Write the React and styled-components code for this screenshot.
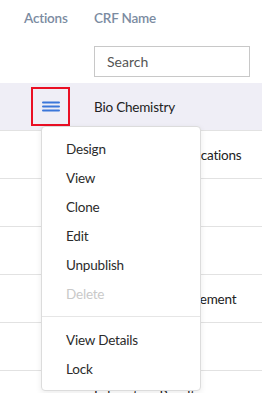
import React from 'react';
import styled, { createGlobalStyle } from 'styled-components';

const GlobalStyle = createGlobalStyle`
  body {
    margin: 0;
    background: #fff;
    font-family: Lato, "Open Sans", sans-serif;
    overflow: hidden;
  }
`;

const Page = styled.div`
  position: relative;
  width: 262px;
  height: 393px;
  overflow: hidden;
`;

const HeaderRow = styled.div`
  display: flex;
  height: 36px;
  align-items: center;
  color: #7b8ba1;
  font-size: 13.5px;
  font-weight: 600;
  letter-spacing: -0.2px;
`;

const ActionsHead = styled.div`
  width: 94px;
  padding-left: 24px;
  box-sizing: border-box;
`;

const FilterRow = styled.div`
  display: flex;
  padding: 10px 0 6px 94px;
`;

const SearchInput = styled.input`
  width: 156px;
  height: 31px;
  box-sizing: border-box;
  border: 1px solid #c8c8c8;
  padding: 0 12px;
  font-family: inherit;
  font-size: 14px;
  color: #555;
  outline: none;
  &::placeholder {
    color: #555;
  }
`;

const Row = styled.div`
  display: flex;
  align-items: center;
  height: 47px;
  border-bottom: 1px solid #e2e2e2;
  background: ${p => (p.selected ? '#efeef6' : '#fff')};
`;

const ActionCell = styled.div`
  width: 94px;
  padding-left: 31px;
  box-sizing: border-box;
`;

const MenuButton = styled.button`
  width: 39px;
  height: 39px;
  box-sizing: border-box;
  border: 2px solid #ea0f24;
  background: transparent;
  display: flex;
  align-items: center;
  justify-content: center;
  padding: 0;
`;

const NameCell = styled.div`
  font-size: 13.5px;
  letter-spacing: -0.2px;
  color: #222;
  white-space: nowrap;
`;

const Menu = styled.div`
  position: absolute;
  left: 41px;
  top: 126px;
  width: 160px;
  box-sizing: border-box;
  background: #fff;
  border: 1px solid #dcdcdc;
  border-radius: 4px;
  box-shadow: 0 2px 6px rgba(0, 0, 0, 0.08);
  padding: 7px 0;
`;

const MenuItem = styled.div`
  height: 29px;
  display: flex;
  align-items: center;
  padding-left: 24px;
  font-size: 13.5px;
  letter-spacing: -0.2px;
  color: ${p => (p.disabled ? '#c9c9c9' : '#2b2b2b')};
`;

const Divider = styled.div`
  height: 1px;
  background: #e6e6e6;
  margin: 8px 0;
`;

const rows = [
  'Concomitant Medications',
  '',
  '',
  'Study Data Management',
  '',
  'Laboratory Results',
];

const Hamburger = () => (
  <svg width="18" height="12" viewBox="0 0 18 12">
    <rect x="0" y="0.5" width="18" height="2" rx="1" fill="#3b76d9" />
    <rect x="0" y="4.5" width="18" height="2" rx="1" fill="#3b76d9" />
    <rect x="0" y="8.5" width="18" height="2" rx="1" fill="#3b76d9" />
  </svg>
);

export default function App() {
  return (
    <Page>
      <GlobalStyle />
      <HeaderRow>
        <ActionsHead>Actions</ActionsHead>
        <div>CRF Name</div>
      </HeaderRow>
      <FilterRow>
        <SearchInput placeholder="Search" />
      </FilterRow>
      <Row selected>
        <ActionCell>
          <MenuButton>
            <Hamburger />
          </MenuButton>
        </ActionCell>
        <NameCell>Bio Chemistry</NameCell>
      </Row>
      {rows.map((name, i) => (
        <Row key={i}>
          <ActionCell />
          <NameCell>{name}</NameCell>
        </Row>
      ))}
      <Menu>
        <MenuItem>Design</MenuItem>
        <MenuItem>View</MenuItem>
        <MenuItem>Clone</MenuItem>
        <MenuItem>Edit</MenuItem>
        <MenuItem>Unpublish</MenuItem>
        <MenuItem disabled>Delete</MenuItem>
        <Divider />
        <MenuItem>View Details</MenuItem>
        <MenuItem>Lock</MenuItem>
      </Menu>
    </Page>
  );
}
